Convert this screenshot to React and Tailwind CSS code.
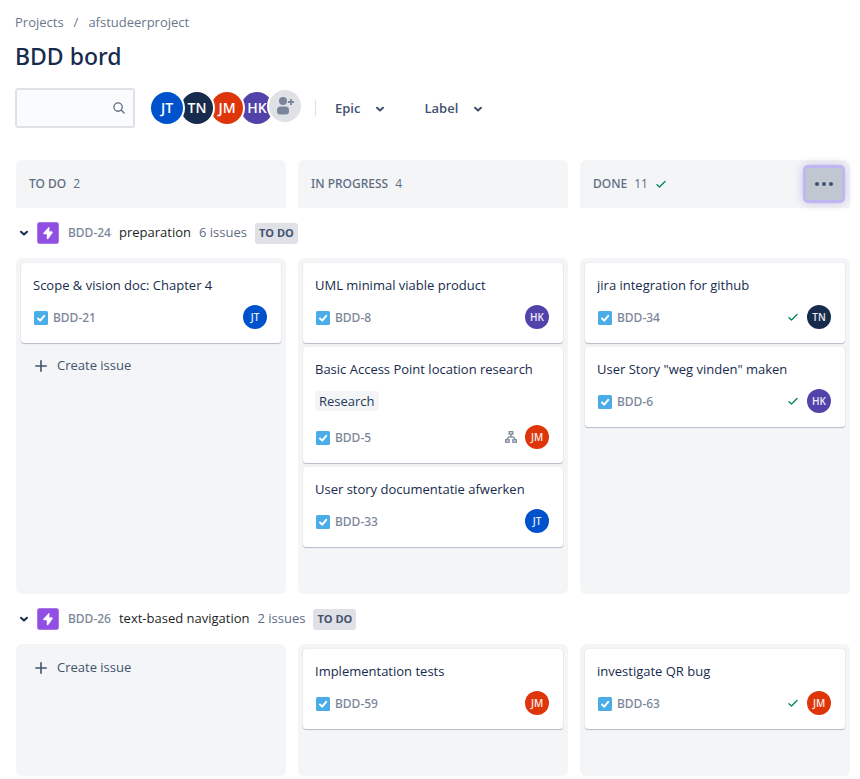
import React from "react";

const PEOPLE = {
  JT: "bg-[#0052cc]",
  TN: "bg-[#172b4d]",
  JM: "bg-[#de350b]",
  HK: "bg-[#5243aa]",
};

const STACK = { JT: "z-40", TN: "z-30", JM: "z-20", HK: "z-10" };

const COLUMNS = [
  { name: "TO DO", count: 2 },
  { name: "IN PROGRESS", count: 4 },
  { name: "DONE", count: 11, done: true },
];

const LANES = [
  {
    id: "BDD-24",
    title: "preparation",
    count: "6 issues",
    columns: [
      [{ id: "BDD-21", title: "Scope & vision doc: Chapter 4", who: "JT" }],
      [
        { id: "BDD-8", title: "UML minimal viable product", who: "HK" },
        { id: "BDD-5", title: "Basic Access Point location research", who: "JM", tag: "Research", subtasks: true },
        { id: "BDD-33", title: "User story documentatie afwerken", who: "JT" },
      ],
      [
        { id: "BDD-34", title: "jira integration for github", who: "TN", done: true },
        { id: "BDD-6", title: 'User Story "weg vinden" maken', who: "HK", done: true },
      ],
    ],
  },
  {
    id: "BDD-26",
    title: "text-based navigation",
    count: "2 issues",
    columns: [
      [],
      [{ id: "BDD-59", title: "Implementation tests", who: "JM" }],
      [{ id: "BDD-63", title: "investigate QR bug", who: "JM", done: true }],
    ],
  },
];

function Chevron() {
  return (
    <svg width="10" height="8" viewBox="0 0 10 8" fill="none" stroke="currentColor" strokeWidth="2" strokeLinecap="round" strokeLinejoin="round" aria-hidden="true">
      <path d="M2 2.8 5 5.6 8 2.8" />
    </svg>
  );
}

function Check() {
  return (
    <svg width="12" height="10" viewBox="0 0 12 10" fill="none" stroke="#00875a" strokeWidth="1.4" strokeLinecap="round" strokeLinejoin="round" aria-label="Done">
      <path d="M2 5.8 4.5 8 10 2.6" />
    </svg>
  );
}

function TaskIcon() {
  return (
    <svg width="14" height="14" viewBox="0 0 14 14" aria-label="Task">
      <rect width="14" height="14" rx="1.5" fill="#4bade8" />
      <path d="M4 7.5 6.2 9.6 10.2 4.8" fill="none" stroke="#fff" strokeWidth="2" strokeLinecap="round" strokeLinejoin="round" />
    </svg>
  );
}

function EpicIcon() {
  return (
    <svg width="22" height="22" viewBox="0 0 22 22" aria-label="Epic">
      <rect x="0.5" y="0.5" width="21" height="21" rx="2" fill="#904ee2" stroke="#a977e8" />
      <path d="M12 5 6.3 11.2 6.9 12.1H10V16.8L11 17.1 15.6 10.6 15.1 9.6H12.2V5.2Z" fill="#fff" stroke="#fff" strokeWidth="0.4" strokeLinejoin="round" />
    </svg>
  );
}

function SubtaskIcon() {
  return (
    <svg width="12" height="12" viewBox="0 0 12 12" fill="none" stroke="#7a869a" strokeWidth="1.3" aria-label="Subtasks">
      <rect x="4.2" y="0.7" width="3.6" height="2.4" />
      <path d="M6 3.1V5.6M2.4 8.8V7.2L4 5.8H8L9.6 7.2V8.8" />
      <rect x="0.7" y="8.8" width="3.4" height="2.4" />
      <rect x="7.9" y="8.8" width="3.4" height="2.4" />
    </svg>
  );
}

function Card({ issue }) {
  return (
    <article className="rounded-[3px] bg-white px-3 pt-3 pb-[14px] shadow-[0_1px_1px_rgba(9,30,66,0.25),0_0_1px_rgba(9,30,66,0.2)]">
      <h3 className="truncate text-[13px] leading-5 text-[#172b4d]">{issue.title}</h3>
      {issue.tag && (
        <div className="mt-3 flex pb-1">
          <span className="rounded-[3px] bg-[#f4f5f7] px-1 text-[13px] leading-5 text-[#253858]">{issue.tag}</span>
        </div>
      )}
      <div className="mt-[10px] flex h-6 items-center pl-px pr-[2px]">
        <div className="flex items-center gap-[5px] pt-[2px]">
          <TaskIcon />
          <a href="#issue" className="font-['Noto_Sans','Open_Sans',sans-serif] text-xs font-medium text-[#7a869a]">{issue.id}</a>
        </div>
        <div className="ml-auto flex items-center gap-2">
          {issue.subtasks && <SubtaskIcon />}
          {issue.done && <Check />}
          <span className={`flex size-6 items-center justify-center rounded-full text-[10px] font-semibold text-white/90 ${PEOPLE[issue.who]}`}>{issue.who}</span>
        </div>
      </div>
    </article>
  );
}

function CreateIssue() {
  return (
    <button className="flex h-9 items-center gap-[10px] self-start pt-[2px] pl-[14px] text-[13px] text-[#42526e]">
      <svg width="12" height="12" viewBox="0 0 12 12" stroke="currentColor" strokeWidth="1.6" strokeLinecap="round" aria-hidden="true">
        <path d="M6 0.8V11.2M0.8 6H11.2" />
      </svg>
      Create issue
    </button>
  );
}

function Lane({ lane }) {
  return (
    <section>
      <div className="flex h-[50px] items-center gap-2 text-[13px]">
        <button className="flex items-center gap-2 pr-px pl-[3px] text-[#172b4d]" aria-label={"Collapse " + lane.title}>
          <Chevron />
          <EpicIcon />
        </button>
        <a href="#epic" className="font-['Noto_Sans','Open_Sans',sans-serif] text-xs font-medium text-[#7a869a]">{lane.id}</a>
        <h2 className="text-[#1d1f24]">{lane.title}</h2>
        <span className="text-[#5e6c84]">{lane.count}</span>
        <span className="rounded-[3px] bg-[#dfe1e6] px-1 pb-[2px] text-[11px] leading-[19px] font-bold text-[#42526e]">TO DO</span>
      </div>
      <div className="grid grid-cols-3 gap-3">
        {lane.columns.map((issues, i) => (
          <div key={i} className="flex flex-col gap-1 rounded-md bg-[#f4f5f7] px-[5px] pt-[5px] pb-[47px]">
            {issues.map((issue) => (
              <Card key={issue.id} issue={issue} />
            ))}
            {i === 0 && <CreateIssue />}
          </div>
        ))}
      </div>
    </section>
  );
}

export default function App() {
  return (
    <main className="min-h-screen bg-white pt-3 pr-[10px] pb-[3px] pl-4 font-['Open_Sans',sans-serif] text-[#172b4d]">
      <div className="-ml-px">
        <nav className="flex gap-[10px] text-[13px] leading-5 text-[#6b778c]" aria-label="Breadcrumb">
          <a href="#projects">Projects</a>
          <span>/</span>
          <a href="#project">afstudeerproject</a>
        </nav>
        <h1 className="mt-2 font-['Noto_Sans','Open_Sans',sans-serif] text-[23px] leading-8 font-medium">BDD bord</h1>

        <div className="mt-4 flex h-10 items-center">
          <label className="relative block w-[120px]">
            <input type="text" aria-label="Search board" className="block h-10 w-full rounded-[3px] border-2 border-[#dfe1e6] bg-[#fafbfc] pr-7 pl-2 text-sm outline-none" />
            <svg className="absolute top-[14px] right-[10px]" width="12" height="12" viewBox="0 0 13 13" fill="none" stroke="#5e6c84" strokeWidth="1.4" strokeLinecap="round" aria-hidden="true">
              <circle cx="5.5" cy="5.5" r="4.5" />
              <path d="M9 9 12 12" />
            </svg>
          </label>
          <div className="isolate ml-[14px] flex items-center">
            {Object.entries(PEOPLE).map(([who, color]) => (
              <button key={who} className={`relative -mr-[6px] rounded-full bg-white p-[2px] ${STACK[who]}`}>
                <span className={`flex size-8 items-center justify-center rounded-full text-sm font-semibold text-white ${color}`}>{who}</span>
              </button>
            ))}
            <button className="relative z-50 -ml-[2px] mb-1 rounded-full bg-white p-[2px]" aria-label="Add people">
              <span className="flex size-8 items-center justify-center rounded-full bg-[#dfe1e6]">
                <svg width="18" height="20" viewBox="0 0 18 20" fill="#7a869a" aria-hidden="true">
                  <circle cx="7" cy="5" r="4" />
                  <path d="M1 14a3.5 3.5 0 0 1 3.5-3.5h5A3.5 3.5 0 0 1 13 14v1.500a3 3 0 0 1-3 3H4a3 3 0 0 1-3-3z" />
                  <path d="M15 3v6M12 6h6" stroke="#7a869a" strokeWidth="1.8" />
                </svg>
              </span>
            </button>
          </div>
          <span className="ml-3 h-4 w-px bg-[#dfe1e6]" />
          <button className="ml-[19px] flex items-center gap-[15px] pt-px text-[13px] font-semibold text-[#42526e]">
            Epic
            <Chevron />
          </button>
          <button className="ml-[39px] flex items-center gap-[15px] pt-px text-[13px] font-semibold text-[#42526e]">
            Label
            <Chevron />
          </button>
        </div>
      </div>

      <div className="mt-8 grid grid-cols-3 gap-3">
        {COLUMNS.map((column) => (
          <header key={column.name} className="flex h-12 items-center gap-[7px] rounded-t-md bg-[#f4f5f7] pr-[5px] pl-[13px] text-xs text-[#5e6c84]">
            <h2 className="font-['Noto_Sans','Open_Sans',sans-serif] font-medium">{column.name}</h2>
            <span>{column.count}</span>
            {column.done && (
              <>
                <Check />
                <button aria-label="Column options" className="ml-auto flex h-[38px] w-[42px] items-center justify-center rounded-[5px] border-3 border-[#c0b6f2] bg-[#c1c7d0] shadow-[0_0_10px_rgba(101,84,192,0.35)]">
                  <svg width="18" height="4" viewBox="0 0 18 4" fill="#42526e" aria-hidden="true">
                    <circle cx="2" cy="2" r="2" />
                    <circle cx="9" cy="2" r="2" />
                    <circle cx="16" cy="2" r="2" />
                  </svg>
                </button>
              </>
            )}
          </header>
        ))}
      </div>
      {LANES.map((lane) => (
        <Lane key={lane.id} lane={lane} />
      ))}
    </main>
  );
}
